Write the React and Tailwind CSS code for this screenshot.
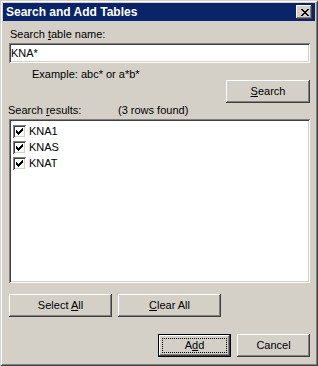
import React from 'react';

const raised =
  'shadow-[inset_-1px_-1px_#404040,inset_1px_1px_#ffffff,inset_-2px_-2px_#808080,inset_2px_2px_#d4d0c8]';
const sunken =
  'shadow-[inset_1px_1px_#808080,inset_-1px_-1px_#ffffff,inset_2px_2px_#404040,inset_-2px_-2px_#d4d0c8]';

function Check() {
  // classic 7x7 pixel check mark
  return (
    <svg width="7" height="7" viewBox="0 0 7 7" shapeRendering="crispEdges" className="block">
      <path
        fill="#000"
        d="M6 0h1v1h-1z M5 1h2v1h-2z M0 2h1v1h-1z M4 2h3v1h-3z M0 3h2v1h-2z M3 3h3v1h-3z M0 4h5v1h-5z M1 5h3v1h-3z M2 6h1v1h-1z"
      />
    </svg>
  );
}

function CloseGlyph() {
  return (
    <svg width="8" height="7" viewBox="0 0 8 7" shapeRendering="crispEdges" className="block">
      <path
        fill="#000"
        d="M0 0h2v1h-2z M6 0h2v1h-2z M1 1h2v1h-2z M5 1h2v1h-2z M2 2h4v1h-4z M3 3h2v1h-2z M2 4h4v1h-4z M1 5h2v1h-2z M5 5h2v1h-2z M0 6h2v1h-2z M6 6h2v1h-2z"
      />
    </svg>
  );
}

function Button({ children, className = '' }) {
  return (
    <div className={`h-[23px] bg-[#d4d0c8] flex items-center justify-center ${raised} ${className}`}>
      {children}
    </div>
  );
}

function Row({ label }) {
  return (
    <div className="h-[16px] flex items-center gap-[3px]">
      <div className={`w-[13px] h-[13px] bg-white flex items-center justify-center ${sunken}`}>
        <Check />
      </div>
      <span>{label}</span>
    </div>
  );
}

export default function App() {
  return (
    <div className="w-[318px] h-[366px] bg-[#d4d0c8] p-[3px] flex flex-col text-[11px] leading-[13px] text-black font-['Liberation_Sans',Arial,sans-serif] shadow-[inset_1px_1px_#d4d0c8,inset_-1px_-1px_#404040,inset_2px_2px_#ffffff,inset_-2px_-2px_#808080]">
      {/* Title bar */}
      <div className="h-[18px] bg-[#0a246a] flex items-center justify-between pl-[3px] pr-[3px]">
        <span className="text-white font-bold text-[12px]">Search and Add Tables</span>
        <div className={`w-[16px] h-[14px] bg-[#d4d0c8] flex items-center justify-center pl-[1px] ${raised}`}>
          <CloseGlyph />
        </div>
      </div>

      <div className="flex flex-col pl-[6px] pr-[5px]">
        <div className="mt-[7px] pl-[1px]">
          Search <u>t</u>able name:
        </div>
        <div className={`mt-[2px] h-[20px] bg-white flex items-center pl-[2px] ${sunken}`}>KNA*</div>

        <div className="flex justify-between items-start">
          <div className="mt-[5px] pl-[23px]">Example: abc* or a*b*</div>
          <Button className="mt-[17px] w-[84px]">
            <span>
              <u>S</u>earch
            </span>
          </Button>
        </div>

        <div className="mt-[1px] flex">
          <span className="w-[110px] -ml-[1px]">
            Search <u>r</u>esults:
          </span>
          <span>(3 rows found)</span>
        </div>

        <div className={`mt-[2px] h-[164px] bg-white flex flex-col pt-[4px] pl-[4px] ${sunken}`}>
          <Row label="KNA1" />
          <Row label="KNAS" />
          <Row label="KNAT" />
        </div>

        <div className="mt-[11px] flex gap-[6px]">
          <Button className="w-[103px]">
            <span>
              Select <u>A</u>ll
            </span>
          </Button>
          <Button className="w-[103px]">
            <span>
              <u>C</u>lear All
            </span>
          </Button>
        </div>

        <div className="mt-[17px] flex justify-end gap-[6px]">
          <div className="w-[73px] h-[23px] border border-black">
            <div className={`w-full h-full bg-[#d4d0c8] p-[3px] ${raised}`}>
              <div className="w-full h-full border border-dotted border-black flex items-center justify-center">
                <span>
                  A<u>d</u>d
                </span>
              </div>
            </div>
          </div>
          <Button className="w-[73px]">
            <span>Cancel</span>
          </Button>
        </div>
      </div>
    </div>
  );
}
